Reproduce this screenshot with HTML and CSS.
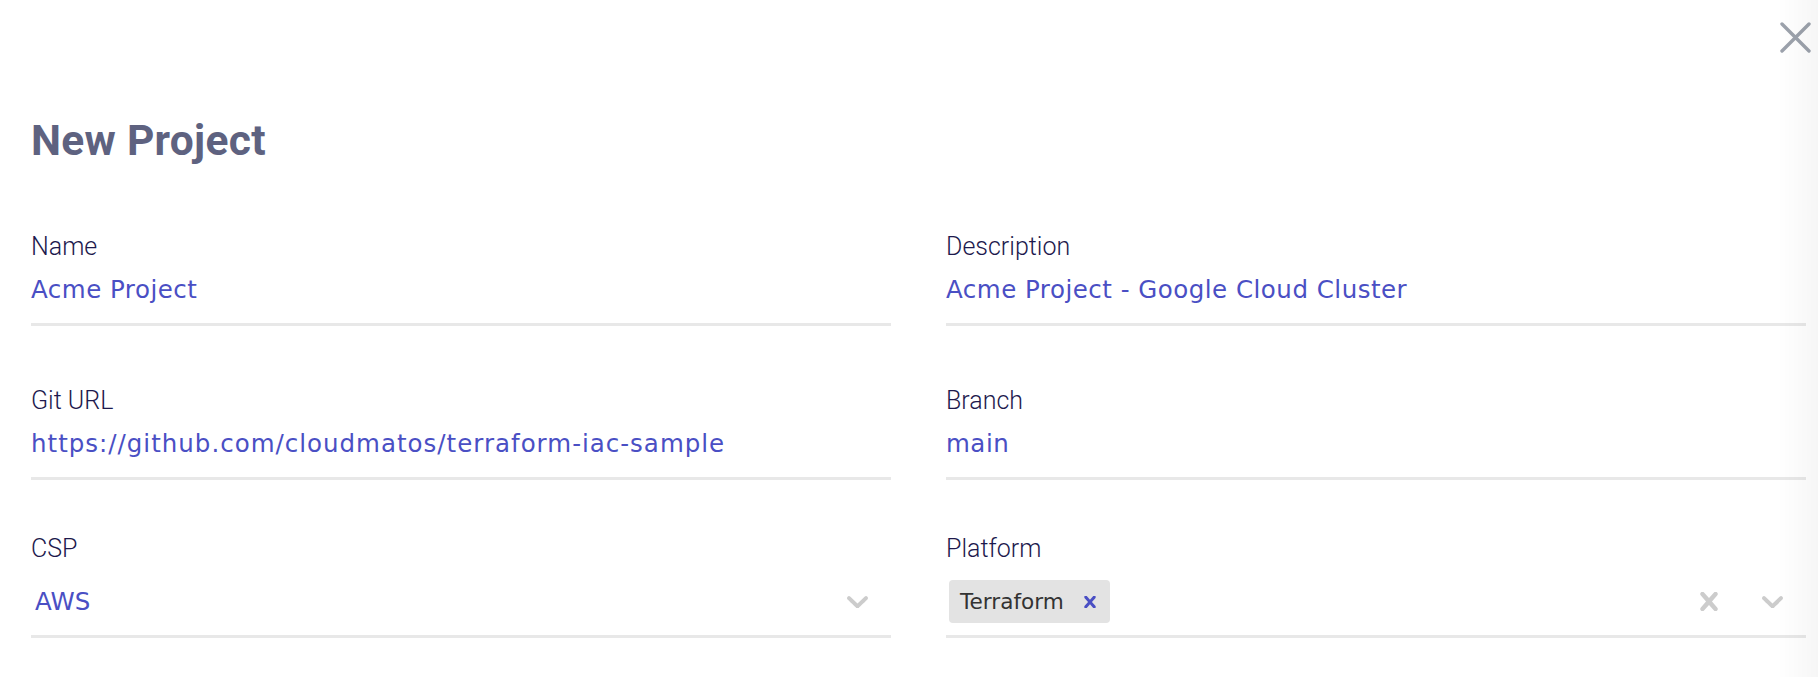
FILE: index.html
```html
<!DOCTYPE html>
<html lang="en">
<head>
<meta charset="utf-8">
<title>New Project</title>
<link rel="stylesheet" href="styles.css">
</head>
<body>
<div class="modal">
  <button class="close" aria-label="Close">
    <svg width="31" height="31" viewBox="0 0 31 31"><path d="M2 2 L29 29 M29 2 L2 29" fill="none" stroke="#9ca2ac" stroke-width="3.4" stroke-linecap="round"/></svg>
  </button>
  <h1 class="title">New Project</h1>
  <div class="form">
    <div class="field field-text">
      <div class="label">Name</div>
      <div class="control"><span class="value">Acme Project</span></div>
    </div>
    <div class="field field-text">
      <div class="label">Description</div>
      <div class="control"><span class="value">Acme Project - Google Cloud Cluster</span></div>
    </div>
    <div class="field field-text">
      <div class="label">Git URL</div>
      <div class="control"><span class="value value-url">https://github.com/cloudmatos/terraform-iac-sample</span></div>
    </div>
    <div class="field field-text">
      <div class="label">Branch</div>
      <div class="control"><span class="value">main</span></div>
    </div>
    <div class="field">
      <div class="label">CSP</div>
      <div class="control select">
        <div class="select-values"><span class="value single">AWS</span></div>
        <div class="indicators">
          <svg class="chevron" width="21" height="12" viewBox="4.2 7.2 11.6 6.6"><path d="M4.516 7.548c0.436-0.446 1.043-0.481 1.576 0l3.908 3.747 3.908-3.747c0.533-0.481 1.141-0.446 1.574 0 0.436 0.445 0.408 1.197 0 1.615-0.406 0.418-4.695 4.502-4.695 4.502-0.217 0.223-0.502 0.335-0.787 0.335s-0.57-0.112-0.789-0.335c0 0-4.287-4.084-4.695-4.502s-0.436-1.17 0-1.615z"/></svg>
        </div>
      </div>
    </div>
    <div class="field">
      <div class="label">Platform</div>
      <div class="control select">
        <div class="select-values">
          <span class="tag"><span class="tag-label">Terraform</span>
            <svg class="tag-remove" width="12" height="12" viewBox="5.2 5.1 9.6 9.8"><path d="M14.348 14.849c-0.469 0.469-1.229 0.469-1.697 0l-2.651-3.030-2.651 3.029c-0.469 0.469-1.229 0.469-1.697 0-0.469-0.469-0.469-1.229 0-1.697l2.758-3.15-2.759-3.152c-0.469-0.469-0.469-1.228 0-1.697s1.228-0.469 1.697 0l2.652 3.031 2.651-3.031c0.469-0.469 1.228-0.469 1.697 0s0.469 1.229 0 1.697l-2.758 3.152 2.758 3.150c0.469 0.469 0.469 1.229 0 1.698z"/></svg>
          </span>
        </div>
        <div class="indicators">
          <svg class="clear" width="18" height="19" viewBox="5.2 5.1 9.6 9.8"><path d="M14.348 14.849c-0.469 0.469-1.229 0.469-1.697 0l-2.651-3.030-2.651 3.029c-0.469 0.469-1.229 0.469-1.697 0-0.469-0.469-0.469-1.229 0-1.697l2.758-3.15-2.759-3.152c-0.469-0.469-0.469-1.228 0-1.697s1.228-0.469 1.697 0l2.652 3.031 2.651-3.031c0.469-0.469 1.228-0.469 1.697 0s0.469 1.229 0 1.697l-2.758 3.152 2.758 3.15c0.469 0.469 0.469 1.229 0 1.698z"/></svg>
          <svg class="chevron" width="21" height="12" viewBox="4.2 7.2 11.6 6.6"><path d="M4.516 7.548c0.436-0.446 1.043-0.481 1.576 0l3.908 3.747 3.908-3.747c0.533-0.481 1.141-0.446 1.574 0 0.436 0.445 0.408 1.197 0 1.615-0.406 0.418-4.695 4.502-4.695 4.502-0.217 0.223-0.502 0.335-0.787 0.335s-0.57-0.112-0.789-0.335c0 0-4.287-4.084-4.695-4.502s-0.436-1.17 0-1.615z"/></svg>
        </div>
      </div>
    </div>
  </div>
</div>
</body>
</html>
```

FILE: styles.css
```css
html, body {
  margin: 0;
  padding: 0;
  background: #ffffff;
}

body {
  font-family: Roboto, "Liberation Sans", sans-serif;
  overflow: hidden;
}

body::after {
  content: "";
  position: fixed;
  top: 0;
  right: 0;
  bottom: 0;
  width: 40px;
  background: linear-gradient(to right, rgba(0, 0, 0, 0), rgba(0, 0, 0, 0.035));
  pointer-events: none;
}

.modal {
  position: relative;
  padding: 117px 12px 0 31px;
  height: 677px;
  box-sizing: border-box;
}

.close {
  position: absolute;
  top: 22px;
  right: 7px;
  padding: 0;
  margin: 0;
  border: 0;
  background: none;
  width: 31px;
  height: 31px;
  display: block;
}

.close svg {
  display: block;
}

.title {
  margin: 0 0 62px 0;
  font-family: Roboto, sans-serif;
  font-weight: 700;
  font-size: 42.5px;
  line-height: 48px;
  letter-spacing: 0.3px;
  color: #5e6280;
}

.form {
  display: grid;
  grid-template-columns: 1fr 1fr;
  column-gap: 55px;
  row-gap: 55px;
}

.field-text {
  padding-top: 6px;
}

.label {
  font-family: Roboto, sans-serif;
  font-weight: 300;
  font-size: 25px;
  line-height: 28px;
  color: #1d194d;
}

.control {
  box-sizing: content-box;
  height: 62px;
  border-bottom: 3px solid #e8e8e8;
  padding-top: 0;
}

.field-text .control {
  height: 48px;
  padding-top: 14px;
}

.value {
  display: block;
  font-family: "DejaVu Sans", sans-serif;
  font-size: 24.5px;
  line-height: 30px;
  letter-spacing: 0.5px;
  color: #4a4fc4;
  white-space: nowrap;
}

.value-url {
  letter-spacing: 1px;
}

.select {
  height: 67px;
  padding-top: 5px;
  display: flex;
  align-items: center;
  justify-content: space-between;
}

.select-values {
  display: flex;
  align-items: center;
  padding-left: 3px;
}

.value.single {
  padding-left: 1px;
  letter-spacing: 0;
  line-height: normal;
}

.tag {
  display: flex;
  align-items: center;
  height: 43px;
  box-sizing: border-box;
  padding: 0 14px 0 11px;
  background: #e3e3e3;
  border-radius: 4px;
}

.tag-label {
  font-family: "DejaVu Sans", sans-serif;
  font-size: 21.6px;
  color: #333333;
}

.tag-remove {
  display: block;
  margin-left: 20px;
  fill: #4a4fc4;
}

.indicators {
  display: flex;
  align-items: center;
  gap: 44px;
  padding-right: 23px;
}

.indicators svg {
  display: block;
  fill: #cccccc;
}
```
